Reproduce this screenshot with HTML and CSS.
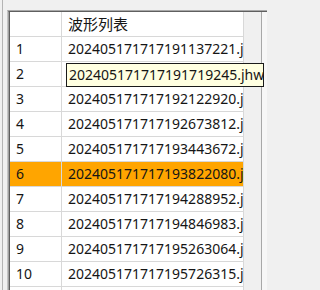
FILE: index.html
```html
<!DOCTYPE html>
<html lang="zh-CN">
<head>
<meta charset="utf-8">
<title>波形列表</title>
<link rel="stylesheet" href="styles.css">
</head>
<body>
<div class="page">
  <div class="pane">
    <div class="grid">
      <div class="grid-inner">
        <div class="table">
          <div class="row header">
            <div class="cell rh"></div>
            <div class="cell data head-text">波形列表</div>
          </div>
          <div class="row"><div class="cell rh">1</div><div class="cell data">202405171717191137221.j</div></div>
          <div class="row"><div class="cell rh">2</div><div class="cell data"></div></div>
          <div class="row"><div class="cell rh">3</div><div class="cell data">202405171717192122920.j</div></div>
          <div class="row"><div class="cell rh">4</div><div class="cell data">202405171717192673812.j</div></div>
          <div class="row"><div class="cell rh">5</div><div class="cell data">202405171717193443672.j</div></div>
          <div class="row selected"><div class="cell rh">6</div><div class="cell data">202405171717193822080.j</div></div>
          <div class="row"><div class="cell rh">7</div><div class="cell data">202405171717194288952.j</div></div>
          <div class="row"><div class="cell rh">8</div><div class="cell data">202405171717194846983.j</div></div>
          <div class="row"><div class="cell rh">9</div><div class="cell data">202405171717195263064.j</div></div>
          <div class="row"><div class="cell rh">10</div><div class="cell data">202405171717195726315.j</div></div>
          <div class="row"><div class="cell rh"></div><div class="cell data"></div></div>
        </div>
        <div class="empty"></div>
        <div class="vscroll"></div>
      </div>
    </div>
  </div>
  <div class="tooltip">202405171717191719245.jhw</div>
</div>
</body>
</html>
```
FILE: styles.css
```css
html, body {
  margin: 0;
  padding: 0;
  background: #f0f0f0;
  overflow: hidden;
}

body {
  font-family: "Noto Sans", "Noto Sans CJK SC", sans-serif;
  font-size: 14px;
  color: #151515;
}

.page {
  position: relative;
  width: 267px;
  height: 290px;
  padding-left: 2px;
  box-sizing: border-box;
  overflow: hidden;
}

.pane {
  height: 100%;
  border-left: 1px solid #b4b4b4;
  padding: 10px 0 0 4px;
  box-sizing: border-box;
}

.grid {
  width: 300px;
  height: 300px;
  border-left: 1px solid #c4c4c4;
  border-top: 1px solid #a8a8a8;
  box-sizing: border-box;
}

.grid-inner {
  display: flex;
  height: 100%;
  border-left: 1px solid #a0a0a0;
  border-top: 1px solid #5f5f5f;
  box-sizing: border-box;
  background: #f0f0f0;
  position: relative;
}

.grid-inner::before {
  content: "";
  position: absolute;
  left: 0;
  top: 0;
  bottom: 0;
  width: 1px;
  background: #5f5f5f;
}

.table {
  width: 235px;
  flex: none;
  background: #ffffff;
  align-self: flex-start;
}

.row {
  display: flex;
  height: 25px;
}

.cell {
  height: 24px;
  line-height: 24px;
  border-right: 1px solid #d8d8d8;
  border-bottom: 1px solid #d8d8d8;
  background: #ffffff;
  white-space: nowrap;
  overflow: hidden;
  box-sizing: content-box;
}

.rh {
  width: 45px;
  padding-left: 7px;
}

.data {
  width: 175px;
  padding-left: 6px;
}

.head-text {
  font-size: 15px;
}

.selected .cell {
  background: #ffa500;
}

.empty {
  width: 17px;
  flex: none;
}

.vscroll {
  width: 20px;
  flex: none;
  border-left: 1px solid #a8a8a8;
  background: #f7f7f7;
}

.tooltip {
  position: absolute;
  left: 66px;
  top: 63px;
  width: 198px;
  height: 24px;
  box-sizing: border-box;
  border: 1px solid #1a1a1a;
  background: #ffffe1;
  padding-left: 2px;
  line-height: 22px;
  white-space: nowrap;
  overflow: hidden;
}
```
